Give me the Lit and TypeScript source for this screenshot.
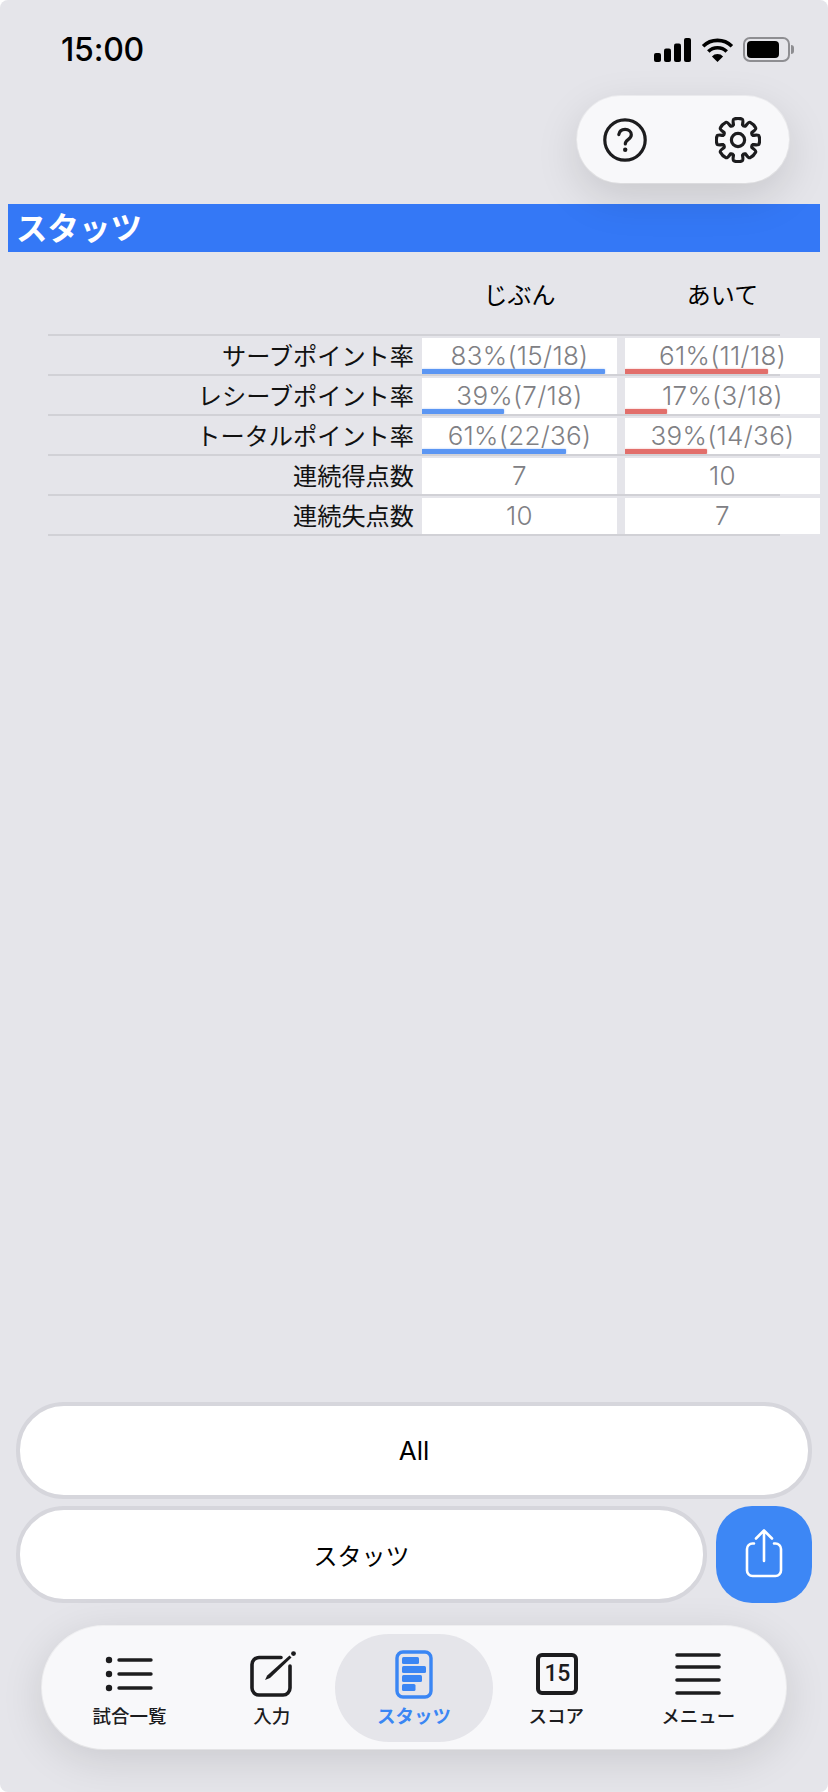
import { LitElement, html, css, svg } from "lit";
import { customElement } from "lit/decorators.js";

type Cell = { text: string; bar?: number };
type Row = { label: string; mine: Cell; theirs: Cell };

const ROWS: Row[] = [
  { label: "サーブポイント率", mine: { text: "83%(15/18)", bar: 183 }, theirs: { text: "61%(11/18)", bar: 143 } },
  { label: "レシーブポイント率", mine: { text: "39%(7/18)", bar: 82 }, theirs: { text: "17%(3/18)", bar: 42 } },
  { label: "トータルポイント率", mine: { text: "61%(22/36)", bar: 144 }, theirs: { text: "39%(14/36)", bar: 82 } },
  { label: "連続得点数", mine: { text: "7" }, theirs: { text: "10" } },
  { label: "連続失点数", mine: { text: "10" }, theirs: { text: "7" } },
];

function gearPath(): string {
  const cx = 23, cy = 23, ro = 21.4, ri = 15.8;
  const p = (r: number, a: number) =>
    `${(cx + r * Math.sin(a)).toFixed(2)} ${(cy - r * Math.cos(a)).toFixed(2)}`;
  const step = Math.PI / 4;
  let d = "";
  for (let i = 0; i < 8; i++) {
    const a = i * step;
    const baseL = a - 0.29, baseR = a + 0.29, tipL = a - 0.2, tipR = a + 0.2;
    const next = a + step - 0.29;
    if (i === 0) d += `M${p(ri, baseL)}`;
    d += `C${p(ri + 2.4, baseL + 0.02)} ${p(ro, tipL - 0.06)} ${p(ro, tipL + 0.02)}`;
    d += `Q${p(ro + 0.9, a)} ${p(ro, tipR - 0.02)}`;
    d += `C${p(ro, tipR + 0.06)} ${p(ri + 2.4, baseR - 0.02)} ${p(ri, baseR)}`;
    d += `Q${p(ri - 1.4, (baseR + next) / 2)} ${p(ri, next)}`;
  }
  return d + "Z";
}

const ICONS = {
  list: svg`<svg width="48" height="36" viewBox="0 0 48 36" fill="none"><g fill="#1c1c1e"><circle cx="4" cy="4" r="3.2"/><circle cx="4" cy="18" r="3.2"/><circle cx="4" cy="32" r="3.2"/></g><g stroke="#1c1c1e" stroke-width="3.4" stroke-linecap="round"><path d="M14 4h32M14 18h32M14 32h32"/></g></svg>`,
  compose: svg`<svg width="48" height="48" viewBox="0 0 48 48" fill="none"><path d="M32 7.5H10a7 7 0 0 0-7 7V38a7 7 0 0 0 7 7h24a7 7 0 0 0 7-7V16" stroke="#1c1c1e" stroke-width="3.6" stroke-linecap="round"/><path d="M16 30 18.2 25.5 40.5 5.5 42.5 7.5 21 28Z" fill="#1c1c1e"/><circle cx="44.5" cy="3.6" r="2.4" fill="#1c1c1e"/></svg>`,
  stats: svg`<svg width="38" height="49" viewBox="0 0 38 49" fill="none"><rect x="2" y="2" width="34" height="45" rx="6" stroke="#3a86f4" stroke-width="3.4"/><g fill="#3a86f4"><rect x="7" y="7" width="17" height="7" rx="1.5"/><rect x="7" y="16" width="24" height="7" rx="1.5"/><rect x="7" y="25" width="20" height="7" rx="1.5"/><rect x="7" y="34" width="13.5" height="7" rx="1.5"/></g></svg>`,
  menu: svg`<svg width="46" height="42" viewBox="0 0 46 42" fill="none" stroke="#1c1c1e" stroke-width="3.6" stroke-linecap="round"><path d="M2 2h42M2 14h42M2 27h42M2 40h42"/></svg>`,
  help: svg`<svg width="44" height="44" viewBox="0 0 44 44" fill="none"><circle cx="22" cy="22" r="20.2" stroke="#1c1c1e" stroke-width="3.2"/><path d="M15.8 16.6c.5-3.4 3-5.2 6.3-5.2 3.6 0 6.2 2.2 6.2 5.3 0 2.4-1.3 3.6-3.2 4.9-1.9 1.3-2.8 2.2-2.8 4.4" stroke="#1c1c1e" stroke-width="3.2" stroke-linecap="round"/><circle cx="22.2" cy="31.8" r="2.2" fill="#1c1c1e"/></svg>`,
  gear: svg`<svg width="46" height="46" viewBox="0 0 46 46" fill="none" stroke="#1c1c1e" stroke-width="3.2" stroke-linejoin="round"><path d="${gearPath()}"/><circle cx="23" cy="23" r="6.6"/></svg>`,
  share: svg`<svg width="38" height="50" viewBox="0 0 38 50" fill="none" stroke="#fff" stroke-width="2.6" stroke-linecap="round" stroke-linejoin="round"><path d="M9 15.5H7.5A5.5 5.5 0 0 0 2 21v21.5A5.5 5.5 0 0 0 7.5 48h23a5.5 5.5 0 0 0 5.5-5.5V21a5.5 5.5 0 0 0-5.5-5.5H29"/><path d="M19 33V2.5M11 10.5l8-8 8 8"/></svg>`,
  signal: svg`<svg width="38" height="24" viewBox="0 0 38 24" fill="#000"><rect x="0" y="15" width="7" height="9" rx="2"/><rect x="10" y="10.5" width="7" height="13.5" rx="2"/><rect x="20" y="5.5" width="7" height="18.5" rx="2"/><rect x="30" y="0" width="7" height="24" rx="2"/></svg>`,
  wifi: svg`<svg width="33" height="24" viewBox="0 0 32 24" fill="none" stroke="#000" stroke-width="3.6"><path d="M1.6 8.3a20.5 20.5 0 0 1 28.8 0"/><path d="M6.8 13.5a13.2 13.2 0 0 1 18.4 0"/><path d="M16 24l-5.6-5.6a8 8 0 0 1 11.2 0Z" fill="#000" stroke="none"/></svg>`,
};

@customElement("app-root")
export class AppRoot extends LitElement {
  static styles = css`
    :host {
      display: block;
      font-family: Inter, "Noto Sans CJK JP", sans-serif;
    }
    * { box-sizing: border-box; }
    .page {
      position: relative;
      display: flex;
      flex-direction: column;
      height: 1792px;
      background: #e5e5ea;
      overflow: hidden;
      border-radius: 8px;
    }
    .status {
      height: 96px;
      flex: none;
      display: flex;
      justify-content: space-between;
      align-items: flex-start;
      padding: 30px 34px 0 61px;
    }
    .time {
      font-size: 32px;
      line-height: 40px;
      font-weight: 500;
      color: #000;
      letter-spacing: -0.2px;
    }
    .indicators {
      display: flex;
      align-items: center;
      gap: 9px;
      margin-top: 7px;
    }
    .indicators svg { display: block; }
    .battery {
      display: flex;
      align-items: center;
      gap: 1px;
    }
    .battery-body {
      width: 47px;
      height: 25px;
      border: 2px solid #8e8e92;
      border-radius: 7px;
      padding: 2px;
    }
    .battery-fill {
      width: 32px;
      height: 100%;
      background: #000;
      border-radius: 4px;
    }
    .battery-cap {
      width: 3px;
      height: 9px;
      background: #8e8e92;
      border-radius: 0 3px 3px 0;
    }
    .float-actions {
      position: absolute;
      left: 577px;
      top: 96px;
      width: 212px;
      height: 87px;
      border-radius: 44px;
      background: #f8f8fa;
      box-shadow: 0 14px 44px rgba(0, 0, 0, 0.13), 0 0 0 1px rgba(255, 255, 255, 0.5);
      display: flex;
      align-items: center;
      justify-content: space-between;
      padding: 0 28px 0 26px;
    }
    .float-actions svg { display: block; }
    .title {
      margin: 108px 8px 0;
      height: 48px;
      flex: none;
      background: #3478f6;
      color: #fff;
      font-size: 31.5px;
      font-weight: 700;
      line-height: 44px;
      padding-left: 8px;
      font-family: "Noto Sans CJK JP", sans-serif;
    }
    .heads {
      display: grid;
      grid-template-columns: 195px 195px;
      column-gap: 8px;
      justify-content: end;
      padding: 24px 8px 0 0;
      height: 82px;
      flex: none;
    }
    .heads div {
      text-align: center;
      font-size: 24px;
      line-height: 36px;
      color: #000;
      font-family: "Noto Sans CJK JP", sans-serif;
    }
    .table {
      flex: none;
      position: relative;
      margin-left: 48px;
      border-top: 2px solid #d1d1d6;
      width: 732px;
    }
    .row {
      display: grid;
      grid-template-columns: 366px 195px 195px;
      column-gap: 8px;
      width: 772px;
      height: 40px;
      position: relative;
    }
    .row::after {
      content: "";
      position: absolute;
      left: 0;
      bottom: 0;
      width: 732px;
      height: 2px;
      background: #d1d1d6;
    }
    .label {
      font-family: "Noto Sans CJK JP", sans-serif;
      text-align: right;
      font-size: 24.2px;
      line-height: 38px;
      color: #111;
      padding-right: 0;
      white-space: nowrap;
    }
    .cell {
      position: relative;
      z-index: 1;
      margin-top: 2px;
      height: 36px;
      background: #fff;
      text-align: center;
      font-size: 26px;
      letter-spacing: 0.3px;
      line-height: 36px;
      color: #808084;
      font-weight: 300;
      overflow: hidden;
    }
    .bar {
      position: absolute;
      left: 0;
      bottom: 0;
      height: 5px;
      border-radius: 0 1px 1px 0;
    }
    .bar.blue { background: #5b96f3; box-shadow: 0 0 2px rgba(91, 150, 243, 0.6); }
    .bar.red { background: #e26f6b; box-shadow: 0 0 2px rgba(226, 111, 107, 0.6); }
    .spacer { flex: 1; }
    .bottom {
      flex: none;
      display: flex;
      flex-direction: column;
      padding: 0 16px;
    }
    .pill {
      height: 97px;
      border-radius: 48px;
      background: #fff;
      border: 4px solid #d6d6dc;
      display: flex;
      align-items: center;
      justify-content: center;
      font-size: 26px;
      font-weight: 400;
      color: #000;
    }
    .pill-row {
      display: flex;
      gap: 9px;
      margin-top: 7px;
    }
    .pill-row .pill {
      flex: 1;
      font-size: 24px;
      font-family: "Noto Sans CJK JP", sans-serif;
      font-weight: 400;
    }
    .share {
      width: 96px;
      height: 97px;
      flex: none;
      border-radius: 36px;
      background: #3d87f5;
      display: flex;
      align-items: center;
      justify-content: center;
    }
    .share svg { display: block; margin-top: -4px; }
    .tabs {
      flex: none;
      position: relative;
      margin: 23px 42px 43px;
      height: 123px;
      border-radius: 62px;
      background: #f8f8fa;
      box-shadow: 0 10px 44px rgba(0, 0, 0, 0.12), 0 0 0 1px rgba(255, 255, 255, 0.7);
      display: grid;
      grid-template-columns: repeat(5, 142.2px);
      justify-content: center;
    }
    .tab {
      position: relative;
      display: flex;
      flex-direction: column;
      align-items: center;
      font-family: "Noto Sans CJK JP", sans-serif;
      font-size: 18.5px;
      font-weight: 500;
      line-height: 26px;
      color: #1c1c1e;
    }
    .tab.active { color: #3a86f4; font-weight: 700; }
    .tab.active::before {
      content: "";
      position: absolute;
      left: -8px;
      right: -8px;
      top: 8px;
      bottom: 7px;
      border-radius: 54px;
      background: #e5e5ea;
    }
    .tab-icon {
      position: relative;
      height: 76px;
      display: flex;
      align-items: center;
      justify-content: center;
      padding-top: 20px;
    }
    .tab-icon svg { display: block; }
    .tab-icon.nudge-left { margin-right: 2px; }
    .tab-icon.nudge-right { margin-left: 2px; }
    .tab-label { position: relative; }
    .score {
      width: 42px;
      height: 42px;
      border: 4px solid #1c1c1e;
      border-radius: 6px;
      display: flex;
      align-items: center;
      justify-content: center;
      font-family: Roboto, sans-serif;
      font-size: 23px;
      font-weight: 500;
      letter-spacing: -0.3px;
      color: #1c1c1e;
    }
  `;

  private cell(c: Cell, color: string) {
    return html`<div class="cell">
      ${c.text}
      ${c.bar ? html`<div class="bar ${color}" style="width:${c.bar}px"></div>` : null}
    </div>`;
  }

  private tab(label: string, icon: unknown, nudge = "", active = false) {
    return html`<div class="tab ${active ? "active" : ""}">
      <div class="tab-icon ${nudge}">${icon}</div>
      <div class="tab-label">${label}</div>
    </div>`;
  }

  render() {
    return html`<div class="page">
      <div class="status">
        <div class="time">15:00</div>
        <div class="indicators">
          ${ICONS.signal}${ICONS.wifi}
          <div class="battery">
            <div class="battery-body"><div class="battery-fill"></div></div>
            <div class="battery-cap"></div>
          </div>
        </div>
      </div>
      <div class="float-actions">${ICONS.help}${ICONS.gear}</div>
      <div class="title">スタッツ</div>
      <div class="heads"><div>じぶん</div><div>あいて</div></div>
      <div class="table">
        ${ROWS.map(
          (r) => html`<div class="row">
            <div class="label">${r.label}</div>
            ${this.cell(r.mine, "blue")}${this.cell(r.theirs, "red")}
          </div>`
        )}
      </div>
      <div class="spacer"></div>
      <div class="bottom">
        <div class="pill">All</div>
        <div class="pill-row">
          <div class="pill">スタッツ</div>
          <div class="share">${ICONS.share}</div>
        </div>
      </div>
      <div class="tabs">
        ${this.tab("試合一覧", ICONS.list, "nudge-left")}
        ${this.tab("入力", ICONS.compose, "nudge-right")}
        ${this.tab("スタッツ", ICONS.stats, "", true)}
        ${this.tab("スコア", html`<div class="score">15</div>`, "nudge-right")}
        ${this.tab("メニュー", ICONS.menu)}
      </div>
    </div>`;
  }
}
